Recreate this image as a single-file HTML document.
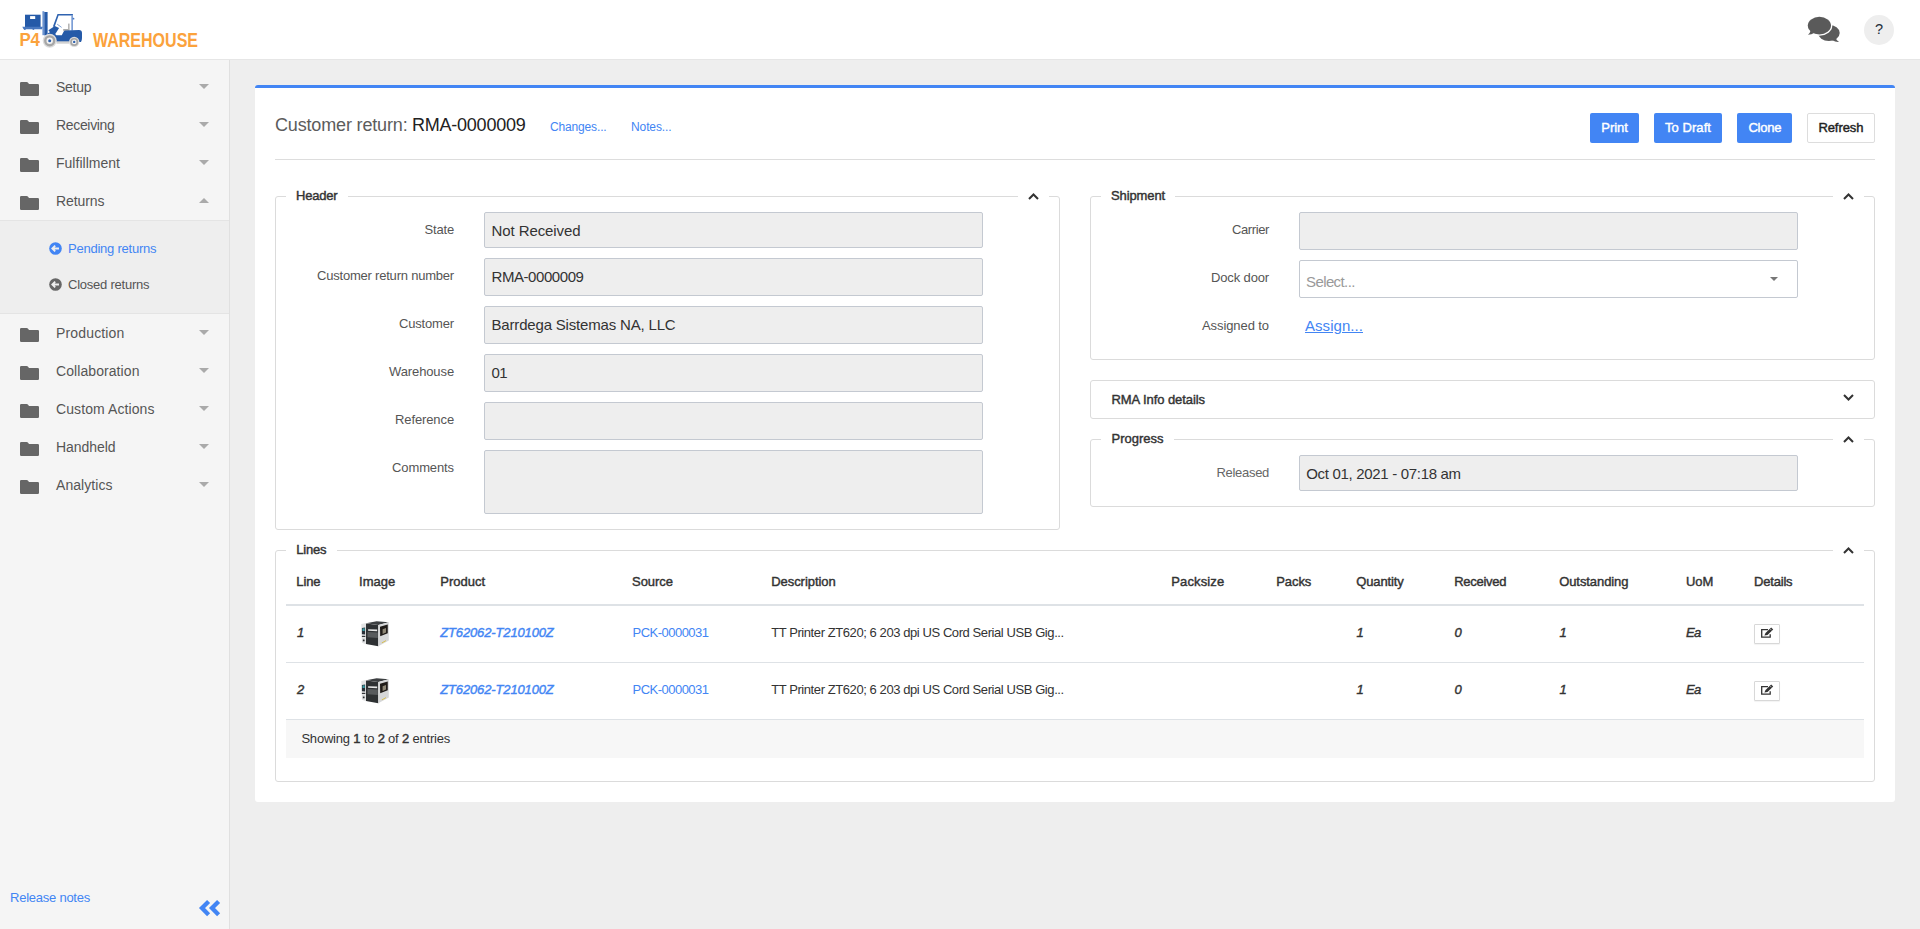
<!DOCTYPE html>
<html lang="en">
<head>
<meta charset="utf-8">
<title>P4 Warehouse - Customer return RMA-0000009</title>
<style>
*{box-sizing:border-box;margin:0;padding:0}
html,body{width:1920px;height:929px;overflow:hidden}
body{font-family:"Liberation Sans",Arial,sans-serif;font-size:13px;color:#333;background:#eee;position:relative}
.a{position:absolute}
.t{position:absolute;white-space:nowrap;line-height:1}
.t b{font-weight:normal;-webkit-text-stroke:.42px}
svg{position:absolute;overflow:visible}
#topbar{position:absolute;left:0;top:0;width:1920px;height:60px;background:#fff;border-bottom:1px solid #e6e6e6}
#sidebar{position:absolute;left:0;top:60px;width:230px;height:869px;background:#f5f5f5;border-right:1px solid #e0e0e0}
#submenu{position:absolute;left:0;top:220px;width:229px;height:94px;background:#eee;border-top:1px solid #e4e4e4;border-bottom:1px solid #e4e4e4}
.caret{position:absolute;left:199.4px;width:0;height:0;border-left:5px solid transparent;border-right:5px solid transparent;border-top:5.5px solid #aaa}
.caret.up{border-top:none;border-bottom:5.5px solid #aaa}
#card{position:absolute;left:255px;top:85px;width:1640px;height:717px;background:#fff;border-top:3px solid #4285f4;border-radius:3px}
.btn{position:absolute;top:113px;height:30px;border-radius:2px;background:#4285f4;color:#fff;font-weight:bold;font-size:13px;text-align:center;line-height:29px;white-space:nowrap}
.btn.w{background:#fff;color:#222;border:1px solid #ddd;line-height:27px}
.fs{position:absolute;border:1px solid #dbdbdb;border-radius:3px}
.gap{position:absolute;background:#fff;height:3px}
.inp{position:absolute;background:#eee;border:1px solid #c4c9d1;border-radius:2px}
.hl{position:absolute;left:286px;width:1578px;height:1px;background:#dee2e6}
.ebtn{position:absolute;left:1754px;width:26px;height:20px;border:1px solid #d8d8d8;border-radius:1px;background:#fff;box-shadow:0 1px 1px rgba(0,0,0,.05)}
</style>
</head>
<body>
<div id="topbar"></div>
<svg style="left:0;top:0" width="210" height="59" viewBox="0 0 210 59">
<rect x="25" y="14.7" width="15.6" height="12.3" fill="#255aa8"/><rect x="30.1" y="16.1" width="5.1" height="2.9" fill="#fff"/>
<path d="M22.3 26.8H43L42 29.2H23.6Z" fill="#4a79c0"/><rect x="24" y="28.6" width="1.6" height="1.2" fill="#3a6ab5"/><rect x="32.6" y="28.6" width="1.6" height="1.2" fill="#3a6ab5"/>
<rect x="42.4" y="11.2" width="1.9" height="24" fill="#6b93cf"/><rect x="44.3" y="12" width="3.3" height="23.4" fill="#255aa8"/>
<path d="M57.5 14.1H72.9V15.6H58.6L54.6 27L52.9 26.4Z" fill="#2f63b0"/>
<rect x="71.3" y="15" width="1.7" height="15.6" fill="#7d9fd6"/><circle cx="73.5" cy="18.7" r=".9" fill="#4a79c0"/>
<path d="M48.4 30.3L54.8 26L59.1 28.1L55.1 34.3L50.5 33Z" fill="#255aa8"/>
<path d="M57.2 24.2L61.6 27.4" stroke="#4a79c0" stroke-width=".7" fill="none"/>
<rect x="63.2" y="29" width="6.2" height="1.9" fill="#a9a9a9"/><rect x="68" y="23.6" width="1.6" height="6" fill="#b5b5b5"/>
<path d="M47.6 33.5L52 31L56.4 35.2H61.8L63.7 31.4Q64.2 30.4 65.4 30.4L79 30Q82 30 82 33V38Q82 40.5 81 42H56.4V40.6H47.6Z" fill="#255aa8"/>
<rect x="56.4" y="41.3" width="12.6" height="2.4" fill="#d2d2d2"/>
<circle cx="49.7" cy="40.8" r="7" fill="#dcdcdc"/><circle cx="49.7" cy="40.8" r="5.6" fill="#a6a6a6"/><circle cx="49.7" cy="40.8" r="3.2" fill="#f2f2f2"/><circle cx="49.7" cy="40.8" r="1.5" fill="#2f63b0"/>
<circle cx="74.2" cy="41.9" r="5.2" fill="#dcdcdc"/><circle cx="74.2" cy="41.9" r="4" fill="#a6a6a6"/><circle cx="74.2" cy="41.9" r="2.3" fill="#f2f2f2"/><circle cx="74.2" cy="41.9" r="1.2" fill="#2f63b0"/>
<text x="19.4" y="46.4" font-family="Liberation Sans, sans-serif" font-weight="bold" font-size="19" fill="#fba23c" textLength="20.6" lengthAdjust="spacingAndGlyphs">P4</text>
<text x="93" y="46.7" font-family="Liberation Sans, sans-serif" font-weight="bold" font-size="21" fill="#fba23c" textLength="105" lengthAdjust="spacingAndGlyphs">WAREHOUSE</text>
</svg>
<svg style="left:1806px;top:15px" width="36" height="29" viewBox="0 0 36 29">
<ellipse cx="22.9" cy="18" rx="10.8" ry="8" fill="#5a5a5a"/>
<path d="M29.5 22.5Q30.5 25.8 33 27Q29.5 27.3 26 25Z" fill="#5a5a5a"/>
<ellipse cx="13.4" cy="10.6" rx="12.9" ry="10.1" fill="#fff"/>
<ellipse cx="13.4" cy="10.6" rx="11.6" ry="8.8" fill="#5a5a5a"/>
<path d="M4.6 15.4Q4 18.2 2 19.8Q5.5 19.8 8.6 17.8Z" fill="#5a5a5a"/>
</svg>
<div class="a" style="left:1864px;top:15px;width:30px;height:30px;border-radius:15px;background:#eee"></div>
<div id="sidebar"></div><div id="submenu"></div>
<svg class="a" style="left:20px;top:82px" width="19" height="14" viewBox="0 0 19 14"><path d="M1.2 0H6.6Q7.4 0 7.9 .6L9 2H17.8Q19 2 19 3.2V12.8Q19 14 17.8 14H1.2Q0 14 0 12.8V1.2Q0 0 1.2 0Z" fill="#666"/></svg>
<div class="caret" style="top:84px"></div>
<svg class="a" style="left:20px;top:120px" width="19" height="14" viewBox="0 0 19 14"><path d="M1.2 0H6.6Q7.4 0 7.9 .6L9 2H17.8Q19 2 19 3.2V12.8Q19 14 17.8 14H1.2Q0 14 0 12.8V1.2Q0 0 1.2 0Z" fill="#666"/></svg>
<div class="caret" style="top:122px"></div>
<svg class="a" style="left:20px;top:158px" width="19" height="14" viewBox="0 0 19 14"><path d="M1.2 0H6.6Q7.4 0 7.9 .6L9 2H17.8Q19 2 19 3.2V12.8Q19 14 17.8 14H1.2Q0 14 0 12.8V1.2Q0 0 1.2 0Z" fill="#666"/></svg>
<div class="caret" style="top:160px"></div>
<svg class="a" style="left:20px;top:196px" width="19" height="14" viewBox="0 0 19 14"><path d="M1.2 0H6.6Q7.4 0 7.9 .6L9 2H17.8Q19 2 19 3.2V12.8Q19 14 17.8 14H1.2Q0 14 0 12.8V1.2Q0 0 1.2 0Z" fill="#666"/></svg>
<div class="caret up" style="top:198px"></div>
<svg class="a" style="left:20px;top:328px" width="19" height="14" viewBox="0 0 19 14"><path d="M1.2 0H6.6Q7.4 0 7.9 .6L9 2H17.8Q19 2 19 3.2V12.8Q19 14 17.8 14H1.2Q0 14 0 12.8V1.2Q0 0 1.2 0Z" fill="#666"/></svg>
<div class="caret" style="top:330px"></div>
<svg class="a" style="left:20px;top:366px" width="19" height="14" viewBox="0 0 19 14"><path d="M1.2 0H6.6Q7.4 0 7.9 .6L9 2H17.8Q19 2 19 3.2V12.8Q19 14 17.8 14H1.2Q0 14 0 12.8V1.2Q0 0 1.2 0Z" fill="#666"/></svg>
<div class="caret" style="top:368px"></div>
<svg class="a" style="left:20px;top:404px" width="19" height="14" viewBox="0 0 19 14"><path d="M1.2 0H6.6Q7.4 0 7.9 .6L9 2H17.8Q19 2 19 3.2V12.8Q19 14 17.8 14H1.2Q0 14 0 12.8V1.2Q0 0 1.2 0Z" fill="#666"/></svg>
<div class="caret" style="top:406px"></div>
<svg class="a" style="left:20px;top:442px" width="19" height="14" viewBox="0 0 19 14"><path d="M1.2 0H6.6Q7.4 0 7.9 .6L9 2H17.8Q19 2 19 3.2V12.8Q19 14 17.8 14H1.2Q0 14 0 12.8V1.2Q0 0 1.2 0Z" fill="#666"/></svg>
<div class="caret" style="top:444px"></div>
<svg class="a" style="left:20px;top:480px" width="19" height="14" viewBox="0 0 19 14"><path d="M1.2 0H6.6Q7.4 0 7.9 .6L9 2H17.8Q19 2 19 3.2V12.8Q19 14 17.8 14H1.2Q0 14 0 12.8V1.2Q0 0 1.2 0Z" fill="#666"/></svg>
<div class="caret" style="top:482px"></div>
<svg style="left:49px;top:241.5px" width="13" height="13" viewBox="0 0 13 13"><circle cx="6.5" cy="6.5" r="6.3" fill="#4285f4"/><path d="M10 6.5H3.6M6.2 3.6L3.3 6.5L6.2 9.4" fill="none" stroke="#eee" stroke-width="1.8"/></svg>
<svg style="left:49px;top:277.5px" width="13" height="13" viewBox="0 0 13 13"><circle cx="6.5" cy="6.5" r="6.3" fill="#666"/><path d="M10 6.5H3.6M6.2 3.6L3.3 6.5L6.2 9.4" fill="none" stroke="#eee" stroke-width="1.8"/></svg>
<svg style="left:199px;top:900px" width="20" height="16" viewBox="0 0 20 16"><path d="M9.6 1.45L3 8.1L9.6 14.75M19.6 1.45L13 8.1L19.6 14.75" fill="none" stroke="#4285f4" stroke-width="4.3" stroke-linejoin="miter"/></svg>
<div id="card"></div>
<div class="btn" style="left:1590px;width:49px"></div>
<div class="btn" style="left:1654px;width:68px"></div>
<div class="btn" style="left:1737px;width:55px"></div>
<div class="btn w" style="left:1807px;width:68px"></div>
<div class="a" style="left:275px;top:159px;width:1600px;height:1px;background:#ddd"></div>
<div class="fs" style="left:275px;top:196px;width:785px;height:334px"></div>
<div class="fs" style="left:1090px;top:196px;width:785px;height:164px"></div>
<div class="fs" style="left:1090px;top:380px;width:785px;height:39px"></div>
<div class="fs" style="left:1090px;top:439px;width:785px;height:68px"></div>
<div class="fs" style="left:275px;top:550px;width:1600px;height:232px"></div>
<div class="gap" style="left:286px;top:195px;width:62px"></div>
<div class="gap" style="left:1018px;top:195px;width:31px"></div>
<div class="gap" style="left:1101px;top:195px;width:74px"></div>
<div class="gap" style="left:1833px;top:195px;width:31px"></div>
<div class="gap" style="left:1101px;top:438px;width:73px"></div>
<div class="gap" style="left:1833px;top:438px;width:31px"></div>
<div class="gap" style="left:286px;top:549px;width:51px"></div>
<div class="gap" style="left:1833px;top:549px;width:31px"></div>
<svg style="left:1028px;top:192.5px" width="11" height="7" viewBox="0 0 11 7"><path d="M1 6L5.5 1.5L10 6" fill="none" stroke="#333" stroke-width="2"/></svg>
<svg style="left:1843px;top:192.5px" width="11" height="7" viewBox="0 0 11 7"><path d="M1 6L5.5 1.5L10 6" fill="none" stroke="#333" stroke-width="2"/></svg>
<svg style="left:1843px;top:393.5px" width="11" height="7" viewBox="0 0 11 7"><path d="M1 1L5.5 5.5L10 1" fill="none" stroke="#333" stroke-width="2"/></svg>
<svg style="left:1843px;top:435.5px" width="11" height="7" viewBox="0 0 11 7"><path d="M1 6L5.5 1.5L10 6" fill="none" stroke="#333" stroke-width="2"/></svg>
<svg style="left:1843px;top:546.5px" width="11" height="7" viewBox="0 0 11 7"><path d="M1 6L5.5 1.5L10 6" fill="none" stroke="#333" stroke-width="2"/></svg>
<div class="inp" style="left:484px;top:212px;width:499px;height:36px"></div>
<div class="inp" style="left:484px;top:258px;width:499px;height:38px"></div>
<div class="inp" style="left:484px;top:306px;width:499px;height:38px"></div>
<div class="inp" style="left:484px;top:354px;width:499px;height:38px"></div>
<div class="inp" style="left:484px;top:402px;width:499px;height:38px"></div>
<div class="inp" style="left:484px;top:450px;width:499px;height:64px"></div>
<div class="inp" style="left:1299px;top:212px;width:499px;height:38px"></div>
<div class="inp" style="left:1299px;top:260px;width:499px;height:38px;background:#fff"></div>
<div class="a" style="left:1770px;top:277px;width:0;height:0;border-left:4px solid transparent;border-right:4px solid transparent;border-top:4px solid #777"></div>
<div class="inp" style="left:1299px;top:455px;width:499px;height:36px"></div>
<div class="hl" style="top:604px;height:2px"></div>
<div class="hl" style="top:662px"></div>
<div class="hl" style="top:719px"></div>
<div class="a" style="left:286px;top:720px;width:1578px;height:38px;background:#f7f7f7"></div>
<svg style="left:359px;top:618px" width="32" height="32" viewBox="0 0 32 32">
<path d="M2.25 6L7 5.1L7 26.25L2.9 24.7Z" fill="#e2e3e4"/>
<path d="M7.2 5.3L17.6 3.2L29.6 4.3L19.3 6.9Z" fill="#3c3f41"/>
<path d="M7 5.6L19.3 7.1L19.3 28.2L7 26Z" fill="#2e3133"/>
<path d="M19.3 7.1L29.8 4.3L29.8 22.6L19.3 28.2Z" fill="#d6d7d8"/>
<path d="M21 8.8L28.75 6.4L28.75 15.3L21.2 18.3Z" fill="#1f1b18"/>
<path d="M23.6 11.2L27 10.1L27 14.6L23.6 15.9Z" fill="#8d8675"/>
<path d="M9.1 11.2L18.2 11.6L18.2 13.3L9.1 12.7Z" fill="#e6e6e6"/>
<path d="M8.5 14L18.8 14.6L18.8 20L8.5 19.2Z" fill="#585b5d"/>
<path d="M2.9 9.9L6.1 9.5L6.1 16.5L2.9 16.2Z" fill="#2a3038"/>
<path d="M3.5 10.5L5.7 10.3L5.7 13L3.5 13Z" fill="#3aa0a8"/>
<rect x="2.9" y="17.8" width="3.4" height="1.2" fill="#33363a"/>
<rect x="3.5" y="20.6" width="2.4" height="3.4" fill="#c4c6c8"/><circle cx="4.7" cy="22.3" r=".9" fill="#2a2c2e"/>
<path d="M22.9 24.4L27 22.2L27 23L22.9 25.2Z" fill="#d8b828"/>
</svg>
<svg style="left:359px;top:675px" width="32" height="32" viewBox="0 0 32 32">
<path d="M2.25 6L7 5.1L7 26.25L2.9 24.7Z" fill="#e2e3e4"/>
<path d="M7.2 5.3L17.6 3.2L29.6 4.3L19.3 6.9Z" fill="#3c3f41"/>
<path d="M7 5.6L19.3 7.1L19.3 28.2L7 26Z" fill="#2e3133"/>
<path d="M19.3 7.1L29.8 4.3L29.8 22.6L19.3 28.2Z" fill="#d6d7d8"/>
<path d="M21 8.8L28.75 6.4L28.75 15.3L21.2 18.3Z" fill="#1f1b18"/>
<path d="M23.6 11.2L27 10.1L27 14.6L23.6 15.9Z" fill="#8d8675"/>
<path d="M9.1 11.2L18.2 11.6L18.2 13.3L9.1 12.7Z" fill="#e6e6e6"/>
<path d="M8.5 14L18.8 14.6L18.8 20L8.5 19.2Z" fill="#585b5d"/>
<path d="M2.9 9.9L6.1 9.5L6.1 16.5L2.9 16.2Z" fill="#2a3038"/>
<path d="M3.5 10.5L5.7 10.3L5.7 13L3.5 13Z" fill="#3aa0a8"/>
<rect x="2.9" y="17.8" width="3.4" height="1.2" fill="#33363a"/>
<rect x="3.5" y="20.6" width="2.4" height="3.4" fill="#c4c6c8"/><circle cx="4.7" cy="22.3" r=".9" fill="#2a2c2e"/>
<path d="M22.9 24.4L27 22.2L27 23L22.9 25.2Z" fill="#d8b828"/>
</svg>
<div class="ebtn" style="top:624px"></div><svg style="left:1761px;top:627px" width="13" height="13" viewBox="0 0 13 13">
<path d="M7 2.6H.7V10.1H9.2V7.2" fill="none" stroke="#333" stroke-width="1.3"/>
<path d="M3.4 8.5L4.5 6L10.2 .4L12.2 2.4L6.5 8Z" fill="#333"/><path d="M9.4 2.2L10.4 3.2" stroke="#fff" stroke-width=".7"/>
</svg>
<div class="ebtn" style="top:681px"></div><svg style="left:1761px;top:684px" width="13" height="13" viewBox="0 0 13 13">
<path d="M7 2.6H.7V10.1H9.2V7.2" fill="none" stroke="#333" stroke-width="1.3"/>
<path d="M3.4 8.5L4.5 6L10.2 .4L12.2 2.4L6.5 8Z" fill="#333"/><path d="M9.4 2.2L10.4 3.2" stroke="#fff" stroke-width=".7"/>
</svg>
<span class="t" style="top:80.00px;font-size:14px;left:56.00px;letter-spacing:-0.269px;color:#555;">Setup</span>
<span class="t" style="top:118.00px;font-size:14px;left:56.00px;letter-spacing:-0.332px;color:#555;">Receiving</span>
<span class="t" style="top:156.00px;font-size:14px;left:56.00px;letter-spacing:0.018px;color:#555;">Fulfillment</span>
<span class="t" style="top:194.00px;font-size:14px;left:56.00px;letter-spacing:-0.090px;color:#555;">Returns</span>
<span class="t" style="top:326.00px;font-size:14px;left:56.00px;letter-spacing:0.156px;color:#555;">Production</span>
<span class="t" style="top:364.00px;font-size:14px;left:56.00px;letter-spacing:0.077px;color:#555;">Collaboration</span>
<span class="t" style="top:402.00px;font-size:14px;left:56.00px;letter-spacing:0.088px;color:#555;">Custom Actions</span>
<span class="t" style="top:440.00px;font-size:14px;left:56.00px;letter-spacing:-0.055px;color:#555;">Handheld</span>
<span class="t" style="top:478.00px;font-size:14px;left:56.00px;letter-spacing:0.052px;color:#555;">Analytics</span>
<span class="t" style="top:242.00px;font-size:13px;left:68.00px;letter-spacing:-0.235px;color:#4285f4;">Pending returns</span>
<span class="t" style="top:278.00px;font-size:13px;left:68.00px;letter-spacing:-0.225px;color:#555;">Closed returns</span>
<span class="t" style="top:891.00px;font-size:13px;left:10.00px;letter-spacing:-0.240px;color:#4285f4;">Release notes</span>
<span class="t" style="top:116.00px;font-size:18px;left:275.00px;letter-spacing:-0.159px;color:#5c5c5c;">Customer return:</span>
<span class="t" style="top:116.00px;font-size:18px;left:412.00px;letter-spacing:-0.234px;color:#222;">RMA-0000009</span>
<span class="t" style="top:121.00px;font-size:12px;left:550.00px;letter-spacing:-0.155px;color:#4285f4;">Changes...</span>
<span class="t" style="top:121.00px;font-size:12px;left:631.00px;letter-spacing:-0.107px;color:#4285f4;">Notes...</span>
<span class="t" style="top:189.00px;font-size:13px;-webkit-text-stroke:.42px;left:296.00px;letter-spacing:-0.190px;color:#333;">Header</span>
<span class="t" style="top:223.00px;font-size:13px;left:424.50px;letter-spacing:-0.172px;color:#555;">State</span>
<span class="t" style="top:269.00px;font-size:13px;left:317.00px;letter-spacing:-0.210px;color:#555;">Customer return number</span>
<span class="t" style="top:317.00px;font-size:13px;left:399.00px;letter-spacing:-0.170px;color:#555;">Customer</span>
<span class="t" style="top:365.00px;font-size:13px;left:389.00px;letter-spacing:-0.111px;color:#555;">Warehouse</span>
<span class="t" style="top:413.00px;font-size:13px;left:395.00px;letter-spacing:-0.109px;color:#555;">Reference</span>
<span class="t" style="top:461.00px;font-size:13px;left:392.00px;letter-spacing:-0.107px;color:#555;">Comments</span>
<span class="t" style="top:223.00px;font-size:15px;left:491.50px;letter-spacing:-0.087px;color:#333;">Not Received</span>
<span class="t" style="top:269.00px;font-size:15px;left:491.50px;letter-spacing:-0.430px;color:#333;">RMA-0000009</span>
<span class="t" style="top:317.00px;font-size:15px;left:491.50px;letter-spacing:-0.177px;color:#333;">Barrdega Sistemas NA, LLC</span>
<span class="t" style="top:365.00px;font-size:15px;left:491.50px;letter-spacing:-0.600px;color:#333;">01</span>
<span class="t" style="top:189.00px;font-size:13px;-webkit-text-stroke:.42px;left:1111.00px;letter-spacing:-0.115px;color:#333;">Shipment</span>
<span class="t" style="top:223.00px;font-size:13px;left:1232.00px;letter-spacing:-0.391px;color:#555;">Carrier</span>
<span class="t" style="top:271.00px;font-size:13px;left:1211.00px;letter-spacing:-0.139px;color:#555;">Dock door</span>
<span class="t" style="top:319.00px;font-size:13px;left:1202.00px;letter-spacing:-0.085px;color:#555;">Assigned to</span>
<span class="t" style="top:274.00px;font-size:15px;left:1306.00px;letter-spacing:-0.600px;color:#999;">Select...</span>
<span class="t" style="top:318.00px;font-size:15px;left:1305.00px;letter-spacing:0.052px;color:#4285f4;text-decoration:underline;">Assign...</span>
<span class="t" style="top:393.00px;font-size:13px;-webkit-text-stroke:.42px;left:1111.50px;letter-spacing:-0.072px;color:#333;">RMA Info details</span>
<span class="t" style="top:431.50px;font-size:13px;-webkit-text-stroke:.42px;left:1111.50px;color:#333;">Progress</span>
<span class="t" style="top:466.00px;font-size:13px;left:1216.50px;letter-spacing:-0.305px;color:#666;">Released</span>
<span class="t" style="top:466.00px;font-size:15px;left:1306.25px;letter-spacing:-0.316px;color:#333;">Oct 01, 2021 - 07:18 am</span>
<span class="t" style="top:542.50px;font-size:13px;-webkit-text-stroke:.42px;left:296.30px;letter-spacing:-0.216px;color:#333;">Lines</span>
<span class="t" style="top:575.00px;font-size:13px;-webkit-text-stroke:.42px;left:296.30px;letter-spacing:-0.145px;color:#333;">Line</span>
<span class="t" style="top:575.00px;font-size:13px;-webkit-text-stroke:.42px;left:359.00px;letter-spacing:0.052px;color:#333;">Image</span>
<span class="t" style="top:575.00px;font-size:13px;-webkit-text-stroke:.42px;left:440.20px;letter-spacing:0.027px;color:#333;">Product</span>
<span class="t" style="top:575.00px;font-size:13px;-webkit-text-stroke:.42px;left:632.00px;letter-spacing:-0.034px;color:#333;">Source</span>
<span class="t" style="top:575.00px;font-size:13px;-webkit-text-stroke:.42px;left:771.20px;letter-spacing:-0.048px;color:#333;">Description</span>
<span class="t" style="top:575.00px;font-size:13px;-webkit-text-stroke:.42px;left:1171.25px;letter-spacing:0.121px;color:#333;">Packsize</span>
<span class="t" style="top:575.00px;font-size:13px;-webkit-text-stroke:.42px;left:1276.25px;letter-spacing:-0.081px;color:#333;">Packs</span>
<span class="t" style="top:575.00px;font-size:13px;-webkit-text-stroke:.42px;left:1356.25px;letter-spacing:-0.115px;color:#333;">Quantity</span>
<span class="t" style="top:575.00px;font-size:13px;-webkit-text-stroke:.42px;left:1454.25px;letter-spacing:-0.275px;color:#333;">Received</span>
<span class="t" style="top:575.00px;font-size:13px;-webkit-text-stroke:.42px;left:1559.20px;letter-spacing:-0.083px;color:#333;">Outstanding</span>
<span class="t" style="top:575.00px;font-size:13px;-webkit-text-stroke:.42px;left:1686.00px;letter-spacing:-0.018px;color:#333;">UoM</span>
<span class="t" style="top:575.00px;font-size:13px;-webkit-text-stroke:.42px;left:1754.00px;letter-spacing:-0.193px;color:#333;">Details</span>
<span class="t" style="top:626.00px;font-size:13px;-webkit-text-stroke:.42px;font-style:italic;left:297.00px;color:#333;">1</span>
<span class="t" style="top:626.00px;font-size:13px;-webkit-text-stroke:.42px;font-style:italic;left:440.20px;letter-spacing:-0.133px;color:#4285f4;">ZT62062-T210100Z</span>
<span class="t" style="top:626.00px;font-size:13px;left:632.50px;letter-spacing:-0.516px;color:#4285f4;">PCK-0000031</span>
<span class="t" style="top:626.00px;font-size:13px;left:771.20px;letter-spacing:-0.420px;color:#333;">TT Printer ZT620; 6 203 dpi US Cord Serial USB Gig...</span>
<span class="t" style="top:626.00px;font-size:13px;-webkit-text-stroke:.42px;font-style:italic;left:1356.60px;color:#333;">1</span>
<span class="t" style="top:626.00px;font-size:13px;-webkit-text-stroke:.42px;font-style:italic;left:1454.60px;color:#333;">0</span>
<span class="t" style="top:626.00px;font-size:13px;-webkit-text-stroke:.42px;font-style:italic;left:1559.60px;color:#333;">1</span>
<span class="t" style="top:626.00px;font-size:13px;-webkit-text-stroke:.42px;font-style:italic;left:1686.00px;letter-spacing:-0.600px;color:#333;">Ea</span>
<span class="t" style="top:683.00px;font-size:13px;-webkit-text-stroke:.42px;font-style:italic;left:297.00px;color:#333;">2</span>
<span class="t" style="top:683.00px;font-size:13px;-webkit-text-stroke:.42px;font-style:italic;left:440.20px;letter-spacing:-0.133px;color:#4285f4;">ZT62062-T210100Z</span>
<span class="t" style="top:683.00px;font-size:13px;left:632.50px;letter-spacing:-0.516px;color:#4285f4;">PCK-0000031</span>
<span class="t" style="top:683.00px;font-size:13px;left:771.20px;letter-spacing:-0.420px;color:#333;">TT Printer ZT620; 6 203 dpi US Cord Serial USB Gig...</span>
<span class="t" style="top:683.00px;font-size:13px;-webkit-text-stroke:.42px;font-style:italic;left:1356.60px;color:#333;">1</span>
<span class="t" style="top:683.00px;font-size:13px;-webkit-text-stroke:.42px;font-style:italic;left:1454.60px;color:#333;">0</span>
<span class="t" style="top:683.00px;font-size:13px;-webkit-text-stroke:.42px;font-style:italic;left:1559.60px;color:#333;">1</span>
<span class="t" style="top:683.00px;font-size:13px;-webkit-text-stroke:.42px;font-style:italic;left:1686.00px;letter-spacing:-0.600px;color:#333;">Ea</span>
<span class="t" style="top:732.00px;font-size:13px;left:301.40px;letter-spacing:-0.198px;color:#333;">Showing <b>1</b> to <b>2</b> of <b>2</b> entries</span>
<span class="t" style="top:22.10px;font-size:14.5px;left:1875.10px;color:#222d3a;">?</span>
<span class="t" style="top:121.20px;font-size:13px;-webkit-text-stroke:.42px;left:1601.25px;letter-spacing:-0.027px;color:#fff;">Print</span>
<span class="t" style="top:121.20px;font-size:13px;-webkit-text-stroke:.42px;left:1665.00px;letter-spacing:0.061px;color:#fff;">To Draft</span>
<span class="t" style="top:121.20px;font-size:13px;-webkit-text-stroke:.42px;left:1748.40px;letter-spacing:-0.234px;color:#fff;">Clone</span>
<span class="t" style="top:121.20px;font-size:13px;-webkit-text-stroke:.42px;left:1818.40px;letter-spacing:-0.076px;color:#222;">Refresh</span>
</body>
</html>
